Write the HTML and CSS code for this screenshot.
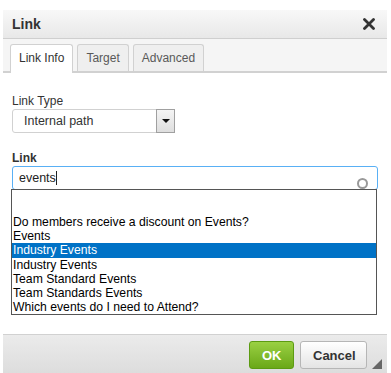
FILE: index.html
```html
<!DOCTYPE html>
<html lang="en">

<head>
    <meta charset="UTF-8">
    <title>Link</title>
    <link rel="stylesheet" href="styles.css">
</head>

<body>
    <div class="dialog">
        <div class="dialog-title">
            <span>Link</span>
            <svg class="close" width="12" height="12" viewBox="0 0 12 12">
                <path d="M1.5 1.5 L10.5 10.5 M10.5 1.5 L1.5 10.5" stroke="#333" stroke-width="2.8" stroke-linecap="round" />
            </svg>
        </div>
        <div class="tabs">
            <div class="tab active">Link Info</div>
            <div class="tab">Target</div>
            <div class="tab">Advanced</div>
        </div>
        <div class="dialog-body">
            <label class="field-label">Link Type</label>
            <div class="select">
                <span class="select-value">Internal path</span>
                <span class="select-btn"><span class="arrow"></span></span>
            </div>
            <label class="field-label bold">Link</label>
            <div class="input-wrap">
                <div class="text-input">events<span class="caret"></span></div>
                <span class="spinner"></span>
                <ul class="suggest">
                    <li class="blank"></li>
                    <li>Do members receive a discount on Events?</li>
                    <li>Events</li>
                    <li class="selected">Industry Events</li>
                    <li>Industry Events</li>
                    <li>Team Standard Events</li>
                    <li>Team Standards Events</li>
                    <li>Which events do I need to Attend?</li>
                </ul>
            </div>
        </div>
        <div class="dialog-footer">
            <button class="btn ok">OK</button>
            <button class="btn cancel">Cancel</button>
            <span class="resize"></span>
        </div>
    </div>
</body>

</html>
```

FILE: styles.css
```css
body {
    margin: 0;
    background-color: #fff;
    font-family: "Liberation Sans", Arial, sans-serif;
    color: #333;
}

.dialog {
    margin: 10px 0 0 3px;
    width: 384px;
}

.dialog-title {
    height: 28px;
    padding: 0 12px 0 9px;
    display: flex;
    align-items: center;
    justify-content: space-between;
    font-size: 14px;
    font-weight: bold;
    background: linear-gradient(#f8f8f8, #e8e8e8);
    border-bottom: 1px solid #cfcfcf;
}

.close {
    display: block;
}

.tabs {
    display: flex;
    gap: 4px;
    padding: 5px 0 0 7px;
    height: 27px;
    background-color: #f5f5f5;
    border-bottom: 2px solid #d1d1d1;
}

.tab {
    font-size: 12px;
    color: #595959;
    padding: 0 8px;
    line-height: 26px;
    border: 1px solid #d1d1d1;
    border-bottom: none;
    border-radius: 3px 3px 0 0;
    background-color: #efefef;
}

.tab.active {
    background-color: #fff;
    color: #333;
    margin-bottom: -2px;
}

.dialog-body {
    padding: 21px 9px 19px 9px;
    background-color: #fff;
}

.field-label {
    display: block;
    font-size: 12px;
    line-height: 15px;
}

.field-label.bold {
    font-weight: bold;
    margin-top: 18px;
}

.select {
    display: flex;
    width: 163px;
    height: 24px;
    border: 1px solid #d1d1d1;
    border-radius: 3px;
    box-sizing: border-box;
    background-color: #fff;
}

.select-value {
    flex: 1;
    font-size: 12.5px;
    line-height: 22px;
    padding-left: 11px;
}

.select-btn {
    width: 17px;
    border: 1px solid #a0a0a0;
    margin: -1px -1px -1px 0;
    background: linear-gradient(#f4f4f4, #dedede);
    display: flex;
    align-items: center;
    justify-content: center;
}

.arrow {
    border-left: 4px solid transparent;
    border-right: 4px solid transparent;
    border-top: 4px solid #111;
}

.input-wrap {
    position: relative;
    width: 366px;
}

.text-input {
    height: 24px;
    box-sizing: border-box;
    border: 1px solid #59b0f5;
    border-radius: 3px;
    font-size: 12.5px;
    line-height: 22px;
    padding-left: 6px;
    color: #222;
}

.caret {
    display: inline-block;
    width: 1px;
    height: 14px;
    background-color: #222;
    vertical-align: -3px;
}

.spinner {
    position: absolute;
    right: 10px;
    top: 12px;
    width: 7px;
    height: 7px;
    border: 2px solid #999;
    border-radius: 50%;
}

.suggest {
    list-style: none;
    margin: -1px 0 0 -1px;
    padding: 0;
    width: 364px;
    border: 1px solid #555;
    background-color: #fff;
    font-size: 12.2px;
    color: #000;
}

.suggest li {
    line-height: 14px;
    height: 14px;
    padding-left: 1px;
}

.suggest li.blank {
    height: 25px;
}

.suggest li.selected {
    background-color: #0072c6;
    color: #fff;
    height: 15px;
}

.dialog-footer {
    height: 40px;
    display: flex;
    align-items: center;
    justify-content: flex-end;
    gap: 6px;
    padding-right: 20px;
    background: linear-gradient(#ebebeb, #dcdcdc);
    border-top: 1px solid #d1d1d1;
    position: relative;
}

.btn {
    font-family: "Liberation Sans", Arial, sans-serif;
    font-size: 13px;
    font-weight: bold;
    height: 28px;
    border-radius: 3px;
    padding: 0 12px;
}

.ok {
    width: 45px;
    color: #fff;
    background: linear-gradient(#9ad043, #6aa818);
    border: 1px solid #5c9b12;
}

.cancel {
    width: 67px;
    color: #333;
    background: linear-gradient(#fff, #e4e4e4);
    border: 1px solid #b6b6b6;
}

.resize {
    position: absolute;
    right: 5px;
    bottom: 6px;
    width: 0;
    height: 0;
    border-left: 10px solid transparent;
    border-bottom: 10px solid #666;
}
```
